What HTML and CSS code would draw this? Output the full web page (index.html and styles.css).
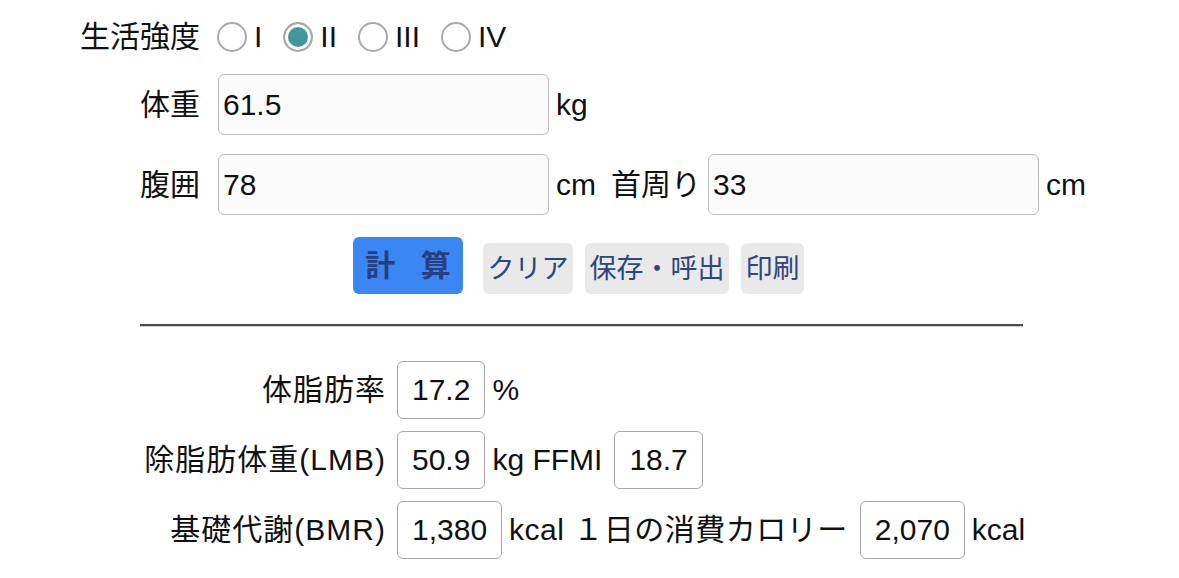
FILE: index.html
```html
<!DOCTYPE html>
<html lang="ja">
<head>
    <meta charset="UTF-8">
    <meta name="viewport" content="width=device-width, initial-scale=1.0">
    <title>体脂肪率計算</title>
    <link rel="stylesheet" href="styles.css">
</head>
<body>
    <main class="page">
        <section class="entrada">
            <span class="etiqueta">生活強度</span>
            <div class="radios">
                <label class="opcion"><input type="radio" name="nivel" value="1">I</label>
                <label class="opcion"><input type="radio" name="nivel" value="2" checked>II</label>
                <label class="opcion"><input type="radio" name="nivel" value="3">III</label>
                <label class="opcion"><input type="radio" name="nivel" value="4">IV</label>
            </div>

            <span class="etiqueta">体重</span>
            <div class="fila">
                <input class="campo" type="text" value="61.5">
                <span class="unidad">kg</span>
            </div>

            <span class="etiqueta">腹囲</span>
            <div class="fila">
                <input class="campo" type="text" value="78">
                <span class="unidad">cm</span>
                <span class="sub">首周り</span>
                <input class="campo" type="text" value="33">
                <span class="unidad">cm</span>
            </div>
        </section>

        <section class="botones">
            <button class="btn principal">計 算</button>
            <button class="btn">クリア</button>
            <button class="btn">保存・呼出</button>
            <button class="btn">印刷</button>
        </section>

        <hr class="linea">

        <section class="resultados">
            <span class="etiqueta">体脂肪率</span>
            <div class="fila">
                <output class="valor">17.2</output>
                <span class="unidad">%</span>
            </div>

            <span class="etiqueta">除脂肪体重(LMB)</span>
            <div class="fila">
                <output class="valor">50.9</output>
                <span class="unidad">kg FFMI</span>
                <output class="valor sep">18.7</output>
            </div>

            <span class="etiqueta">基礎代謝(BMR)</span>
            <div class="fila">
                <output class="valor">1,380</output>
                <span class="unidad largo">kcal &#xFF11;日の消費カロリー</span>
                <output class="valor sep">2,070</output>
                <span class="unidad">kcal</span>
            </div>
        </section>
    </main>
</body>
</html>
```

FILE: styles.css
```css
body {
    font-family: "Liberation Sans", "Noto Sans CJK JP", sans-serif;
    font-size: 30px;
    line-height: 36px;
    color: #111;
    background-color: #fff;
    margin: 0;
    padding: 0;
}

.page {
    padding-top: 18px;
}

.entrada {
    display: grid;
    grid-template-columns: 122px auto;
    column-gap: 17px;
    row-gap: 19px;
    margin-left: 78px;
    align-items: center;
}

.etiqueta {
    text-align: right;
    white-space: nowrap;
}

.fila {
    display: flex;
    align-items: center;
    gap: 7px;
    white-space: nowrap;
}

.radios {
    display: flex;
    align-items: center;
    gap: 21px;
    height: 37px;
}

.opcion {
    display: flex;
    align-items: center;
    gap: 7px;
}

.opcion input {
    appearance: none;
    width: 30px;
    height: 30px;
    margin: 0;
    border: 2px solid #a9a9a9;
    border-radius: 50%;
    background-color: #fff;
}

.opcion input:checked {
    background-color: #41979c;
    box-shadow: inset 0 0 0 3px #fff;
}

.campo {
    font: inherit;
    color: #111;
    width: 331px;
    height: 61px;
    box-sizing: border-box;
    padding: 0 4px;
    border: 1.5px solid #bdbdbd;
    border-radius: 6px;
    background-color: #fbfbfb;
}

.fila > .campo:first-child {
    margin-left: 1px;
}

.sub {
    margin-left: 8px;
}

.botones {
    display: flex;
    align-items: flex-end;
    gap: 12px;
    margin-top: 22px;
    margin-left: 353px;
}

.btn {
    font: inherit;
    font-size: 27px;
    color: #2c4584;
    background-color: #e9e9e9;
    border: none;
    border-radius: 6px;
    padding: 0 4.5px;
    height: 51px;
}

.btn.principal {
    font-size: 30px;
    font-weight: bold;
    word-spacing: 17px;
    color: #283f7c;
    background-color: #3a87f4;
    height: 57px;
    width: 110px;
    padding: 0;
    margin-right: 8px;
}

.linea {
    width: 883px;
    margin: 30px 0 0 140px;
    height: 0;
    border: none;
    border-top: 2px solid #4d4d4d;
    border-bottom: 1px solid #cfcfcf;
}

.resultados {
    display: grid;
    grid-template-columns: 385px auto;
    column-gap: 12px;
    row-gap: 12px;
    margin-top: 34px;
    align-items: center;
}

.resultados .etiqueta {
    letter-spacing: 1px;
    margin-right: -1px;
}

.valor {
    display: inline-flex;
    align-items: center;
    height: 58px;
    box-sizing: border-box;
    padding: 0 14px;
    border: 1.5px solid #a8a8a8;
    border-radius: 6px;
}

.valor.sep {
    margin-left: 5px;
}

.largo {
    letter-spacing: 0.5px;
}
```
